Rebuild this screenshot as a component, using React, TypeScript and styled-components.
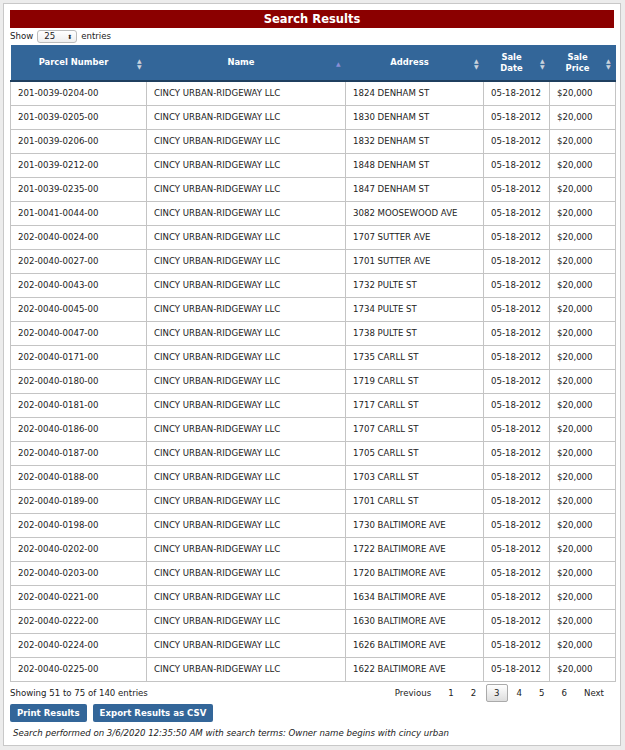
import React from "react";
import styled, { createGlobalStyle } from "styled-components";

const Global = createGlobalStyle`
  html, body { margin: 0; background: #ececec; }
  body { font-family: "DejaVu Sans", Verdana, sans-serif; font-size: 8.6px; color: #222; }
  * { box-sizing: border-box; }
`;

const Panel = styled.div`
  margin: 3px 4px 0 3px;
  background: #fff;
  border: 1px solid #c8c8c8;
  padding: 6px 6px 10px 6px;
  height: 743px;
`;

const Title = styled.div`
  background: #8b0000;
  color: #fff;
  text-align: center;
  font-size: 11.5px;
  font-weight: bold;
  height: 18px;
  line-height: 18px;
`;

const ShowRow = styled.div`
  display: flex;
  align-items: center;
  gap: 4px;
  height: 16px;
  margin-bottom: 1px;
`;

const Select = styled.div`
  width: 40px;
  height: 13px;
  border: 1px solid #bbb;
  border-radius: 3px;
  background: linear-gradient(#fff, #eee);
  display: flex;
  justify-content: space-between;
  align-items: center;
  padding: 0 4px 0 6px;
  font-size: 8.6px;
`;

const Table = styled.table`
  width: 100%;
  border-collapse: collapse;
  table-layout: fixed;
`;

const Th = styled.th`
  background: #336699;
  color: #fff;
  font-size: 8.4px;
  font-weight: bold;
  height: 36px;
  padding: 0 14px 0 4px;
  position: relative;
  border-bottom: 2px solid #1f3f5f;
  line-height: 11px;
  vertical-align: middle;
`;

const Sort = styled.span<{ active?: boolean }>`
  position: absolute;
  right: 5px;
  top: 50%;
  transform: translateY(-50%);
  display: flex;
  flex-direction: column;
  gap: 1px;
  color: ${(p) => (p.active ? "#8a8fd6" : "#c9d3dd")};
  font-size: 6px;
  line-height: 5px;
`;

const Td = styled.td`
  border: 1px solid #c4c4c4;
  height: 24px;
  padding: 0 7px;
  white-space: nowrap;
  overflow: hidden;
`;

const Footer = styled.div`
  display: flex;
  justify-content: space-between;
  align-items: center;
  margin-top: 2px;
  height: 18px;
`;

const Pager = styled.div`
  display: flex;
  align-items: center;
  margin-right: 2px;
`;

const PageBtn = styled.span<{ current?: boolean }>`
  padding: 3px 7px;
  margin-left: ${(p) => (p.current ? "2px" : "1px")};
  border: 1px solid ${(p) => (p.current ? "#aaa" : "transparent")};
  border-radius: 2px;
  background: ${(p) => (p.current ? "linear-gradient(#fff, #ddd)" : "transparent")};
`;

const Buttons = styled.div`
  display: flex;
  gap: 6px;
  margin-top: 2px;
`;

const Btn = styled.button`
  background: #336699;
  color: #fff;
  border: none;
  border-radius: 2px;
  font-family: inherit;
  font-size: 8.6px;
  font-weight: bold;
  height: 18px;
  padding: 0 7px;
`;

const Note = styled.div`
  font-style: italic;
  margin-top: 6px;
  padding-left: 3px;
`;

const addrs = [
  "1824 DENHAM ST", "1830 DENHAM ST", "1832 DENHAM ST", "1848 DENHAM ST", "1847 DENHAM ST",
  "3082 MOOSEWOOD AVE", "1707 SUTTER AVE", "1701 SUTTER AVE", "1732 PULTE ST", "1734 PULTE ST",
  "1738 PULTE ST", "1735 CARLL ST", "1719 CARLL ST", "1717 CARLL ST", "1707 CARLL ST",
  "1705 CARLL ST", "1703 CARLL ST", "1701 CARLL ST", "1730 BALTIMORE AVE", "1722 BALTIMORE AVE",
  "1720 BALTIMORE AVE", "1634 BALTIMORE AVE", "1630 BALTIMORE AVE", "1626 BALTIMORE AVE", "1622 BALTIMORE AVE",
];
const parcels = [
  "201-0039-0204-00", "201-0039-0205-00", "201-0039-0206-00", "201-0039-0212-00", "201-0039-0235-00",
  "201-0041-0044-00", "202-0040-0024-00", "202-0040-0027-00", "202-0040-0043-00", "202-0040-0045-00",
  "202-0040-0047-00", "202-0040-0171-00", "202-0040-0180-00", "202-0040-0181-00", "202-0040-0186-00",
  "202-0040-0187-00", "202-0040-0188-00", "202-0040-0189-00", "202-0040-0198-00", "202-0040-0202-00",
  "202-0040-0203-00", "202-0040-0221-00", "202-0040-0222-00", "202-0040-0224-00", "202-0040-0225-00",
];

const SortIcon = ({ active }: { active?: boolean }) =>
  active ? (
    <Sort active>▲</Sort>
  ) : (
    <Sort>
      <span>▲</span>
      <span>▼</span>
    </Sort>
  );

const widths = [136, 199, 138, 66, 66];

export default function App() {
  return (
    <>
      <Global />
      <Panel>
        <Title>Search Results</Title>
        <ShowRow>
          Show <Select><span>25</span><span style={{ fontSize: 6 }}>⬍</span></Select> entries
        </ShowRow>
        <Table>
          <colgroup>
            {widths.map((w, i) => (
              <col key={i} style={{ width: w }} />
            ))}
          </colgroup>
          <thead>
            <tr>
              <Th>Parcel Number<SortIcon /></Th>
              <Th>Name<SortIcon active /></Th>
              <Th>Address<SortIcon /></Th>
              <Th>Sale<br />Date<SortIcon /></Th>
              <Th>Sale<br />Price<SortIcon /></Th>
            </tr>
          </thead>
          <tbody>
            {parcels.map((p, i) => (
              <tr key={p}>
                <Td>{p}</Td>
                <Td>CINCY URBAN-RIDGEWAY LLC</Td>
                <Td>{addrs[i]}</Td>
                <Td>05-18-2012</Td>
                <Td>$20,000</Td>
              </tr>
            ))}
          </tbody>
        </Table>
        <Footer>
          <span>Showing 51 to 75 of 140 entries</span>
          <Pager>
            <PageBtn>Previous</PageBtn>
            <PageBtn>1</PageBtn>
            <PageBtn>2</PageBtn>
            <PageBtn current>3</PageBtn>
            <PageBtn>4</PageBtn>
            <PageBtn>5</PageBtn>
            <PageBtn>6</PageBtn>
            <PageBtn>Next</PageBtn>
          </Pager>
        </Footer>
        <Buttons>
          <Btn>Print Results</Btn>
          <Btn>Export Results as CSV</Btn>
        </Buttons>
        <Note>Search performed on 3/6/2020 12:35:50 AM with search terms: Owner name begins with cincy urban</Note>
      </Panel>
    </>
  );
}
